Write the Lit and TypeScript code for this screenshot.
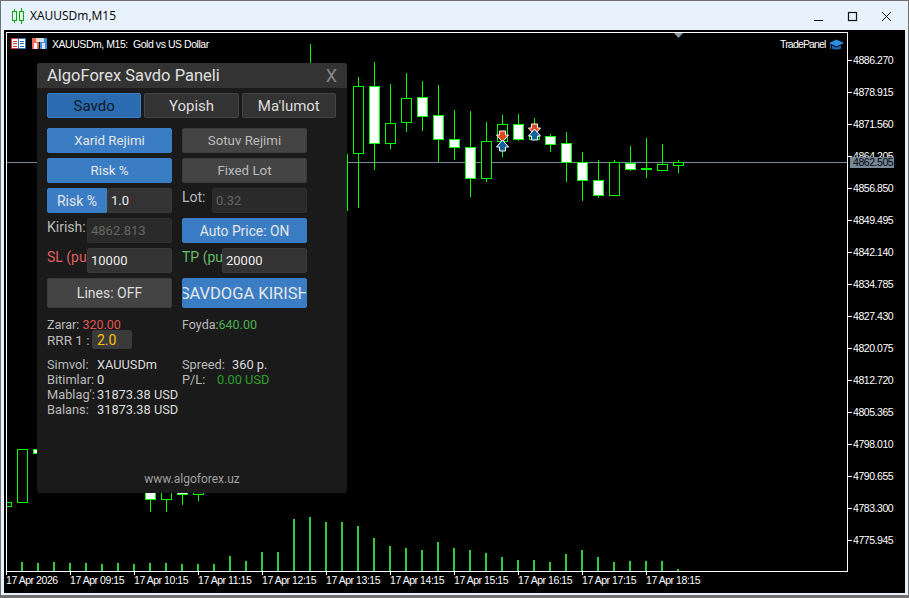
import { LitElement, css, html, svg } from 'lit';
import { customElement } from 'lit/decorators.js';

// x, wick top, wick bottom, body top, body bottom, filled
const candles: [number, number, number, number, number, boolean][] = [
  [6, 502, 506, 502, 506, false],
  [22, 449, 502, 449, 502, false],
  [38, 449, 453, 449, 453, true],
  [150, 480, 512, 480, 499, true],
  [166, 480, 512, 480, 499, false],
  [182, 480, 505, 480, 494, true],
  [198, 480, 501, 480, 494, false],
  [310, 44, 80, 70, 90, false],
  [342, 140, 240, 154, 210, false],
  [358, 77, 208, 86, 153, false],
  [374, 62, 170, 86, 143, true],
  [390, 84, 149, 123, 143, false],
  [406, 73, 132, 98, 122, false],
  [422, 81, 131, 97, 116, true],
  [438, 85, 162, 115, 139, true],
  [454, 110, 160, 139, 147, true],
  [470, 111, 197, 147, 178, true],
  [486, 122, 182, 141, 178, false],
  [502, 115, 157, 124, 141, false],
  [518, 114, 141, 124, 139, true],
  [534, 118, 140, 136, 139, false],
  [550, 134, 152, 136, 144, true],
  [566, 132, 182, 143, 162, true],
  [582, 152, 201, 162, 180, true],
  [598, 160, 198, 180, 195, true],
  [614, 160, 196, 162, 195, false],
  [630, 146, 171, 163, 169, true],
  [646, 138, 178, 168, 169, true],
  [662, 144, 171, 164, 170, false],
  [678, 160, 173, 162, 165, false],
];

const volumeTops: number[] = [
  562, 563, 562, 563, 563, 564, 563, 564, 563, 563, 564, 564, 564, 556, 561, 552, 552, 519, 517, 522, 522, 526, 538,
  546, 548, 550, 542, 548, 550, 553, 557, 560, 560, 562, 554, 550, 557, 562, 561, 561, 561, 569,
];

const prices = [
  '4886.270', '4878.915', '4871.560', '4864.205', '4856.850', '4849.495', '4842.140', '4834.785',
  '4827.430', '4820.075', '4812.720', '4805.365', '4798.010', '4790.655', '4783.300', '4775.945',
];

const times = [
  '17 Apr 2026', '17 Apr 09:15', '17 Apr 10:15', '17 Apr 11:15', '17 Apr 12:15', '17 Apr 13:15',
  '17 Apr 14:15', '17 Apr 15:15', '17 Apr 16:15', '17 Apr 17:15', '17 Apr 18:15',
];

const downArrow = (x: number, y: number) => svg`
  <path d="M${x - 3} ${y - 5}h6v4h3l-6 7-6-7h3z" fill="#e2451f" stroke="#fff" stroke-width="1"></path>`;
const upArrow = (x: number, y: number) => svg`
  <path d="M${x - 3} ${y + 5}h6v-4h3l-6-7-6 7h3z" fill="#14609f" stroke="#fff" stroke-width="1"></path>`;

@customElement('app-root')
export class AppRoot extends LitElement {
  static styles = css`
    :host {
      display: block;
      width: 909px;
      height: 598px;
      overflow: hidden;
      font-family: Roboto, sans-serif;
    }

    .window {
      box-sizing: border-box;
      width: 909px;
      height: 598px;
      display: flex;
      flex-direction: column;
      background: #e8f2fc;
      border: 1px solid #707070;
      border-bottom-width: 3px;
    }

    .titlebar {
      height: 29px;
      display: flex;
      align-items: center;
      padding-left: 11px;
      gap: 6px;
      flex: none;
    }

    .titlebar .name {
      font-family: 'Open Sans', sans-serif;
      font-size: 12px;
      color: #000;
      flex: 1;
    }

    .controls {
      display: block;
      margin-right: 3px;
    }

    .client {
      position: relative;
      flex: none;
      width: 901px;
      height: 563px;
      margin-left: 3px;
      background: #000;
    }

    .chart {
      display: block;
    }

    .chart text {
      font-family: 'Liberation Sans', sans-serif;
      font-size: 10.5px;
      letter-spacing: -0.45px;
      fill: #fff;
    }

    .chart text.tag {
      fill: #000;
    }

    .panel {
      position: absolute;
      left: 33px;
      top: 33px;
      box-sizing: border-box;
      width: 310px;
      height: 430px;
      background: #1a1a1a;
      border-radius: 3px;
      overflow: hidden;
      display: flex;
      flex-direction: column;
      color: #bbb;
      font-size: 12.5px;
    }

    .head {
      height: 25px;
      flex: none;
      display: flex;
      align-items: center;
      justify-content: space-between;
      padding: 0 10px;
      background: #333;
      color: #e0e0e0;
      font-size: 16.500px;
    }

    .head .x {
      color: #888;
      font-size: 18px;
    }

    .tabs {
      display: grid;
      grid-template-columns: repeat(3, 94.33px);
      gap: 3px;
      margin: 5px 0 10px 10px;
    }

    .tab {
      box-sizing: border-box;
      height: 25px;
      display: flex;
      align-items: center;
      justify-content: center;
      background: #333;
      border: 1px solid #444;
      border-radius: 2px;
      color: #ddd;
      font-size: 15px;
    }

    .tab.on {
      background: #2b6cb0;
      border-color: #3a7dc4;
      color: #0c1a2b;
    }

    .form {
      display: grid;
      grid-template-columns: 125px 125px;
      column-gap: 10px;
      row-gap: 5px;
      margin-left: 10px;
    }

    .btn {
      box-sizing: border-box;
      height: 25px;
      display: flex;
      align-items: center;
      justify-content: center;
      white-space: nowrap;
      overflow: hidden;
      border-radius: 2px;
      background: #444;
      border: 1px solid #3c3c3c;
      color: #bbb;
      font-size: 13.300px;
    }

    .btn.on {
      background: #3a7dc4;
      border-color: #3a7dc4;
      color: #e6e6e6;
    }

    .btn.big {
      height: 30px;
      font-size: 14px;
      color: #ddd;
    }

    .btn.auto {
      font-size: 13.800px;
    }

    .btn.enter {
      font-size: 16.500px;
      color: #e6e6e6;
    }

    .field {
      display: flex;
      height: 25px;
    }

    .field .btn {
      width: 60px;
      flex: none;
      font-size: 14px;
      border-radius: 2px 0 0 2px;
    }

    .lbl {
      flex: none;
      width: 40px;
      font-size: 14px;
      line-height: 19px;
      white-space: nowrap;
      overflow: hidden;
    }

    .lbl.lot {
      width: 30px;
    }

    .lbl.sl {
      color: #e06060;
    }

    .lbl.tp {
      color: #66bb6a;
    }

    input {
      box-sizing: border-box;
      flex: 1;
      min-width: 0;
      height: 25px;
      padding: 0 3px;
      margin: 0;
      background: #333;
      border: 1px solid #3a3a3a;
      border-radius: 2px;
      color: #eee;
      font-family: Roboto, sans-serif;
      font-size: 13px;
      outline: none;
    }

    input:disabled {
      background: #2a2a2a;
      border-color: #2e2e2e;
      color: #666;
    }

    .result {
      display: grid;
      grid-template-columns: 135px 125px;
      margin: 9px 0 0 10px;
      line-height: 15px;
    }

    .red {
      color: #e05555;
    }

    .green {
      color: #4caf50;
    }

    .rrr {
      display: flex;
      align-items: center;
      height: 19px;
      margin-left: 10px;
      margin-top: -2px;
      font-size: 13.500px;
    }

    .rrr span {
      flex: none;
      width: 45px;
    }

    .rrr input {
      flex: none;
      width: 40px;
      height: 19px;
      padding: 0 4px;
      background: #3a3a3a;
      color: #ffc107;
      font-size: 14px;
    }

    .info {
      display: grid;
      grid-template-columns: 135px 125px;
      margin: 8px 0 0 10px;
      line-height: 15px;
      font-size: 12.800px;
    }

    .row {
      display: flex;
    }

    .row b {
      font-weight: 400;
      width: 50px;
      flex: none;
      white-space: nowrap;
      overflow: hidden;
    }

    .row b.pl {
      width: 35px;
    }

    .row span {
      color: #ddd;
      white-space: nowrap;
    }

    .row span.profit {
      color: #2ca02c;
    }

    .site {
      margin-top: auto;
      margin-bottom: 6px;
      text-align: center;
      color: #a0a0a0;
      font-size: 12px;
      line-height: 15px;
    }
  `;

  private _chart() {
    return svg`
      <rect x="6.5" y="32.5" width="841" height="539" fill="none" stroke="#fff"></rect>
      <g shape-rendering="crispEdges">
        <rect x="7" y="162" width="840" height="1" fill="#778899"></rect>
        ${volumeTops.map((top, i) => svg`
          <rect x=${21 + i * 16} y=${top} width="2" height=${571 - top} fill="#32cd32"></rect>`)}
        ${candles.map(([x, wt, wb, bt, bb, filled]) => svg`
          <rect x=${x} y=${wt} width="1" height=${wb - wt} fill="#00ff00"></rect>
          <rect x=${x - 4.5} y=${bt + 0.5} width="10" height=${bb - bt} fill=${filled ? '#fff' : '#000'} stroke="#00ff00"></rect>`)}
      </g>
      <rect x="0" y="30" width="6" height="563" fill="#000"></rect>
      <rect x="6" y="32" width="1" height="540" fill="#fff"></rect>
      ${downArrow(502.5, 136)} ${upArrow(502.5, 146)}
      ${downArrow(534.5, 129)} ${upArrow(534.5, 135)}
      <path d="M674 33h9l-4.5 5z" fill="#8a97a6"></path>

      <g shape-rendering="crispEdges">
        <rect x="11.5" y="38.5" width="14" height="10" fill="#fff" stroke="#d33"></rect>
        <rect x="18.5" y="38.5" width="7" height="10" fill="none" stroke="#2a6fb5"></rect>
        <path d="M13 41h4M13 43.500h4M13 46h4" stroke="#d33" fill="none"></path>
        <path d="M20 41h4M20 43.500h4M20 46h4" stroke="#2a6fb5" fill="none"></path>
        <rect x="32" y="38" width="7" height="11" fill="#f06a5a"></rect>
        <rect x="40" y="38" width="7" height="11" fill="#3a8fd8"></rect>
        <rect x="36" y="38" width="8" height="4" fill="#ddd"></rect>
        <rect x="34" y="43" width="3" height="6" fill="#fff"></rect>
        <rect x="42" y="43" width="3" height="6" fill="#cfe6fa"></rect>
      </g>
      <text x="52" y="47.500">XAUUSDm, M15:</text>
      <text x="133" y="47.500">Gold vs US Dollar</text>
      <text x="780" y="47.500" textLength="46">TradePanel</text>
      <path d="M829 43l7.500-3.500 7.500 3.500-7.500 3.500z" fill="#2a8ee0"></path>
      <path d="M832 45.500v3c2 1.500 7 1.500 9 0v-3l-4.500 2z" fill="#1668b8"></path>
      <rect x="830" y="44" width="1" height="5" fill="#1668b8"></rect>

      ${prices.map((p, i) => {
        const y = Math.round(59.5 + i * 32);
        return svg`
          <rect x="848" y=${y} width="4" height="1" fill="#fff"></rect>
          <text x="853" y=${y + 4}>${p}</text>`;
      })}
      <rect x="850" y="157" width="44" height="11" fill="#778899"></rect>
      <text class="tag" x="853" y="166">4862.505</text>

      ${times.map((t, i) => svg`
        <rect x=${6 + i * 64} y="571" width="1" height="4" fill="#fff"></rect>
        <text x=${6 + i * 64} y="584">${t}</text>`)}
    `;
  }

  render() {
    return html`
      <div class="window">
        <div class="titlebar">
          <svg width="12" height="16" viewBox="0 0 12 16">
            <g fill="none" stroke="#00a800" shape-rendering="crispEdges">
              <rect x="0.5" y="3.500" width="4" height="9"></rect>
              <path d="M2.500 1v2.500M2.500 12.500v2.500"></path>
              <rect x="7.500" y="3.500" width="4" height="9"></rect>
              <path d="M9.500 0v3.500M9.500 12.500v3.500"></path>
            </g>
          </svg>
          <span class="name">XAUUSDm,M15</span>
          <svg class="controls" width="94" height="16" viewBox="0 0 94 16">
            <g fill="none" stroke="#111">
              <path d="M3 12.500h9"></path>
              <rect x="37.500" y="4.500" width="8" height="8" stroke-width="1.200"></rect>
              <path d="M71 4l9 9M80 4l-9 9"></path>
            </g>
          </svg>
        </div>
        <div class="client">
          <svg class="chart" width="901" height="563" viewBox="4 30 901 563">${this._chart()}</svg>
          <div class="panel">
            <div class="head"><span>AlgoForex Savdo Paneli</span><span class="x">X</span></div>
            <div class="tabs">
              <div class="tab on">Savdo</div>
              <div class="tab">Yopish</div>
              <div class="tab">Ma'lumot</div>
            </div>
            <div class="form">
              <div class="btn on">Xarid Rejimi</div>
              <div class="btn">Sotuv Rejimi</div>
              <div class="btn on">Risk %</div>
              <div class="btn">Fixed Lot</div>
              <div class="field"><div class="btn on">Risk %</div><input .value=${'1.0'} /></div>
              <div class="field"><span class="lbl lot">Lot:</span><input disabled .value=${'0.32'} /></div>
              <div class="field"><span class="lbl">Kirish:</span><input disabled .value=${'4862.813'} /></div>
              <div class="btn on auto">Auto Price: ON</div>
              <div class="field"><span class="lbl sl">SL (punkt)</span><input .value=${'10000'} /></div>
              <div class="field"><span class="lbl tp">TP (punkt)</span><input .value=${'20000'} /></div>
              <div class="btn big">Lines: OFF</div>
              <div class="btn on big enter">SAVDOGA KIRISH</div>
            </div>
            <div class="result">
              <div>Zarar: <span class="red">320.00</span></div>
              <div>Foyda:<span class="green">640.00</span></div>
            </div>
            <div class="rrr"><span>RRR 1 :</span><input .value=${'2.0'} /></div>
            <div class="info">
              <div class="row"><b>Simvol:</b><span>XAUUSDm</span></div>
              <div class="row"><b>Spreed:</b><span>360 p.</span></div>
              <div class="row"><b>Bitimlar:</b><span>0</span></div>
              <div class="row"><b class="pl">P/L:</b><span class="profit">0.00 USD</span></div>
              <div class="row"><b>Mablag':</b><span>31873.38 USD</span></div>
              <div></div>
              <div class="row"><b>Balans:</b><span>31873.38 USD</span></div>
            </div>
            <div class="site">www.algoforex.uz</div>
          </div>
        </div>
      </div>
    `;
  }
}
